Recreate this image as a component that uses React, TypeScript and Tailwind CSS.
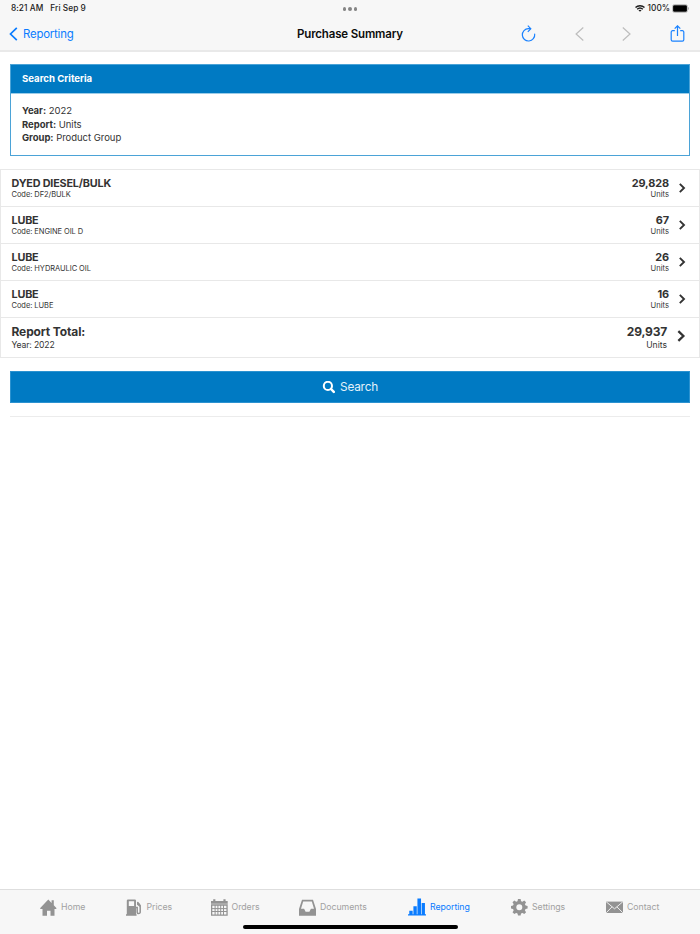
import type { ReactNode } from 'react';

const ROWS = [
  { name: 'DYED DIESEL/BULK', code: 'DF2/BULK', units: '29,828' },
  { name: 'LUBE', code: 'ENGINE OIL D', units: '67' },
  { name: 'LUBE', code: 'HYDRAULIC OIL', units: '26' },
  { name: 'LUBE', code: 'LUBE', units: '16' },
];

export default function App() {
  return (
    <div className="flex h-[934px] w-[700px] flex-col overflow-hidden bg-white font-['Inter','Liberation_Sans',sans-serif] text-[#333]">
      <header className="h-[52px] shrink-0 border-b-2 border-[#e9e9e9] bg-[#f7f7f7]">
        <StatusBar />
        <NavBar />
      </header>
      <main className="flex-1">
        <SearchCriteria />
        <section className="mt-[13px] border border-[#e8e8e8]">
          {ROWS.map((r) => (
            <SummaryRow key={r.code} {...r} />
          ))}
          <TotalRow />
        </section>
        <div className="mx-[10px] mt-[13px] border-b border-[#ececec] pb-[13px]">
          <button className="flex h-8 w-full items-center justify-center gap-[5px] border border-[#2b92d0] bg-[#007ac3] text-[11.8px] tracking-[-0.22px] text-[#e3f1fa]">
            <SearchIcon />
            <span className="pt-[1.5px]">Search</span>
          </button>
        </div>
      </main>
      <TabBar />
    </div>
  );
}

function StatusBar() {
  return (
    <div className="grid h-[17px] grid-cols-3 items-center px-[11px] text-[8.3px] font-medium text-[#1c1c1c]">
      <div className="flex gap-[7px] tracking-[0.05px]">
        <span>8:21 AM</span>
        <span>Fri Sep 9</span>
      </div>
      <div className="flex justify-center gap-[2px] pt-px">
        <span className="size-[3.5px] rounded-full bg-[#858585]" />
        <span className="size-[3.5px] rounded-full bg-[#858585]" />
        <span className="size-[3.5px] rounded-full bg-[#858585]" />
      </div>
      <div className="flex items-center justify-end">
        <svg className="mr-[3px] h-[7px] w-[10px]" viewBox="0 0 20 14" fill="none" stroke="#1c1c1c" strokeWidth="2.8">
          <path d="M1 5.2a13 13 0 0 1 18 0M4.3 8.5a8.3 8.3 0 0 1 11.4 0" />
          <path d="M10 13.5 6.9 10.7a4.7 4.7 0 0 1 6.2 0z" fill="#1c1c1c" stroke="none" />
        </svg>
        <span>100%</span>
        <svg className="ml-[2px] h-[9px] w-[17px]" viewBox="0 0 17 9">
          <rect x=".5" y=".5" width="15" height="8" rx="2" fill="none" stroke="#aaa" strokeWidth=".7" />
          <rect x="1.1" y="1.3" width="13.8" height="6.4" rx="1.2" fill="#000" />
          <path d="M16.1 3v3c1-.5 1-2.5 0-3z" fill="#999" />
        </svg>
      </div>
    </div>
  );
}

function NavBar() {
  return (
    <div className="grid h-[33px] grid-cols-[200px_300px_200px] items-center">
      <button className="flex items-center gap-[5px] pt-px pl-[9px] text-[11.4px] tracking-[-0.2px] text-[#0a7cff]">
        <svg className="h-[14px] w-[9px]" viewBox="0 0 9 14" fill="none" stroke="currentColor" strokeWidth="1.7">
          <path d="M7.8.8 1.5 7l6.3 6.2" />
        </svg>
        <span className="pt-px">Reporting</span>
      </button>
      <h1 className="pt-[2px] text-center text-[11.5px] font-semibold tracking-[-0.16px] text-[#0c0c0c]">Purchase Summary</h1>
      <div className="flex items-center pl-[21px]">
        <svg className="h-[18px] w-[15px]" viewBox="0 0 15 18" fill="none" stroke="#1a82ff" strokeWidth="1.2">
          <path d="M9.2 3.6H7.4A6.2 6.2 0 1 0 13.7 9.1" strokeLinecap="round" />
          <path d="M6.8.6 9.8 3.7 6.8 6.8" />
        </svg>
        <svg className="ml-[38px] h-[14px] w-[10px]" viewBox="0 0 10 14" fill="none" stroke="#bdbdbd" strokeWidth="1.2">
          <path d="M9.3.5 2.1 7l7.2 6.5" />
        </svg>
        <svg className="ml-[38px] h-[14px] w-[10px]" viewBox="0 0 10 14" fill="none" stroke="#bdbdbd" strokeWidth="1.2">
          <path d="M.8.5 8 7 .8 13.5" />
        </svg>
        <svg className="ml-[38px] h-[18px] w-[15px]" viewBox="0 0 15 18" fill="none" stroke="#1a82ff" strokeWidth="1.2">
          <path d="M4.8 5.7H2.6A1.4 1.4 0 0 0 1.2 7.1v7.7a1.4 1.4 0 0 0 1.4 1.4h9.8a1.4 1.4 0 0 0 1.4-1.4V7.1a1.4 1.4 0 0 0-1.4-1.4h-2.2" />
          <path d="M7.5 11V.9M4.7 3.6 7.5.8l2.8 2.8" />
        </svg>
      </div>
    </div>
  );
}

function SearchCriteria() {
  return (
    <section className="mx-[10px] mt-[12px] h-[92px] border border-[#4ba3d7]">
      <h2 className="flex h-[28px] items-center bg-[#007ac3] pt-px pl-[11px] text-[9.6px] font-bold text-white">
        Search Criteria
      </h2>
      <div className="border-t border-[#9bcce8] pt-[10px] pl-[11px] text-[9.5px] leading-[13.7px] tracking-[-0.03px]">
        <p><b>Year:</b> 2022</p>
        <p><b>Report:</b> Units</p>
        <p><b>Group:</b> Product Group</p>
      </div>
    </section>
  );
}

function SummaryRow({ name, code, units }: { name: string; code: string; units: string }) {
  return (
    <div className="flex h-[37px] items-center border-b border-[#e8e8e8] pr-[13px] pl-[10.5px]">
      <div className="flex-1">
        <p className="text-[10.8px] leading-[13px] font-bold tracking-[-0.18px]">{name}</p>
        <p className="text-[7.5px] leading-[10px] tracking-[-0.06px]">Code: {code}</p>
      </div>
      <div className="text-right">
        <p className="text-[10.9px] leading-[13px] font-bold tracking-[-0.12px]">{units}</p>
        <p className="text-[7.6px] leading-[10px]">Units</p>
      </div>
      <Chevron className="mb-px ml-[9px] h-[10px] w-[8px]" />
    </div>
  );
}

function TotalRow() {
  return (
    <div className="flex h-[39px] items-center pr-[13px] pl-[10.5px]">
      <div className="flex-1">
        <p className="text-[12px] leading-[15px] font-bold tracking-[-0.12px]">Report Total:</p>
        <p className="text-[8.6px] leading-[12px] tracking-[-0.13px]">Year: 2022</p>
      </div>
      <div className="text-right">
        <p className="text-[12px] leading-[15px] font-bold tracking-[-0.2px]">29,937</p>
        <p className="text-[8.6px] leading-[12px]">Units</p>
      </div>
      <Chevron className="mb-[3px] ml-[9px] h-[12px] w-[10px]" />
    </div>
  );
}

function Chevron({ className }: { className: string }) {
  return (
    <svg className={className} viewBox="0 0 8 10" fill="none" stroke="#333" strokeWidth="1.9">
      <path d="M1.8.9 6 5 1.8 9.1" />
    </svg>
  );
}

function SearchIcon() {
  return (
    <svg className="size-[13px]" viewBox="0 0 13 13" fill="none" stroke="#fff">
      <circle cx="5.9" cy="4.9" r="4.1" strokeWidth="2" />
      <path d="m9 8 2.8 2.9" strokeWidth="2.5" strokeLinecap="round" />
    </svg>
  );
}

const GEAR_TEETH = [0, 45, 90, 135, 180, 225, 270, 315];

/* Tab bar glyphs share a 17x17 box */
const TABS: { label: string; active?: boolean; icon: ReactNode }[] = [
  {
    label: 'Home',
    icon: <path d="M0 9.2 8.3.5l3.3 3.4V1.2h2.2v5l2.8 3-.6.7h-1.5v6.8h-4v-5H7v5H2.5V9.9H.6z" />,
  },
  {
    label: 'Prices',
    icon: (
      <>
        <path fillRule="evenodd" d="M2.1.5h6.8q1.1 0 1.1 1.1v13.6h.6v1.6H0v-1.6h.8V1.6Q.8.5 2.1.5zm.7 1.7v4.7h5.3V2.2z" />
        <path d="M10 8.6h1.2v4.8q0 1.2 1.4 1.2t1.6-1.2V6.6l-2.7-3.4" fill="none" stroke="currentColor" strokeWidth="1.5" />
        <path d="M11 2.6v3.2l3 2.1V5.3z" />
      </>
    ),
  },
  {
    label: 'Orders',
    icon: (
      <>
        <path fillRule="evenodd" d="M0 1.9h2.2V.3h2.2v1.6h8V.3h2.2v1.6h2.1v14.8H0zM1.3 6.7v8.8h14.1V6.7z" />
        <path d="M1 9.6h15M1 12.5h15M4.1 6v10M6.9 6v10M9.7 6v10M12.5 6v10" stroke="currentColor" strokeWidth="1" />
        <path d="M0 5h16.7" stroke="#f7f7f7" strokeWidth=".5" />
      </>
    ),
  },
  {
    label: 'Documents',
    icon: (
      <path fillRule="evenodd" d="M3 .7h11L17 10v6.7H0V10zM4.2 2.5 2 9.8h3.1l1.5 2.9h3.8l1.5-2.9H15l-2.2-7.3z" />
    ),
  },
  {
    label: 'Reporting',
    active: true,
    icon: <path d="M0 15.3h1.2v-3.2h3.2v3.2h.7V7.9h3.2v7.4h.6V.5h3.4v14.8h.6V4.7h3.1v10.6h1v1.3H0z" />,
  },
  {
    label: 'Settings',
    icon: (
      <>
        <circle cx="8.3" cy="8.3" r="4.7" fill="none" stroke="currentColor" strokeWidth="3.4" />
        {GEAR_TEETH.map((deg) => (
          <path key={deg} d="M6.3 3 7 0h2.6l.7 3z" transform={`rotate(${deg} 8.3 8.3)`} />
        ))}
      </>
    ),
  },
  {
    label: 'Contact',
    icon: (
      <>
        <path d="M0 2.6h17V14H0z" />
        <path d="m.2 2.8 8.3 7 8.3-7M.2 13.8l5.9-6M16.8 13.8l-5.9-6" fill="none" stroke="#f7f7f7" strokeWidth=".9" />
      </>
    ),
  },
];

function TabBar() {
  return (
    <footer className="flex h-[45px] shrink-0 flex-col items-center border-t border-[#dedede] bg-[#f7f7f7]">
      <nav className="grid w-full grid-cols-[85.5px_85px_88.5px_109px_103px_95px_1fr] pt-[8px] pl-[40px] text-[8.75px] tracking-[-0.04px]">
        {TABS.map((tab) => (
          <div
            key={tab.label}
            className={`flex h-[18px] items-center gap-[4px] ${tab.active ? 'text-[#0a7cff]' : 'text-[#939393]'}`}
          >
            <svg className={tab.active ? 'h-[18px] w-[18px]' : 'size-[17px]'} viewBox="0 0 17 17" fill="currentColor">
              {tab.icon}
            </svg>
            <span className={tab.active ? 'pt-[1.5px]' : 'pt-[1.5px] text-[#a1a1a1]'}>{tab.label}</span>
          </div>
        ))}
      </nav>
      <div className="mt-[9px] h-[4px] w-[215px] shrink-0 rounded-full bg-black" />
    </footer>
  );
}
